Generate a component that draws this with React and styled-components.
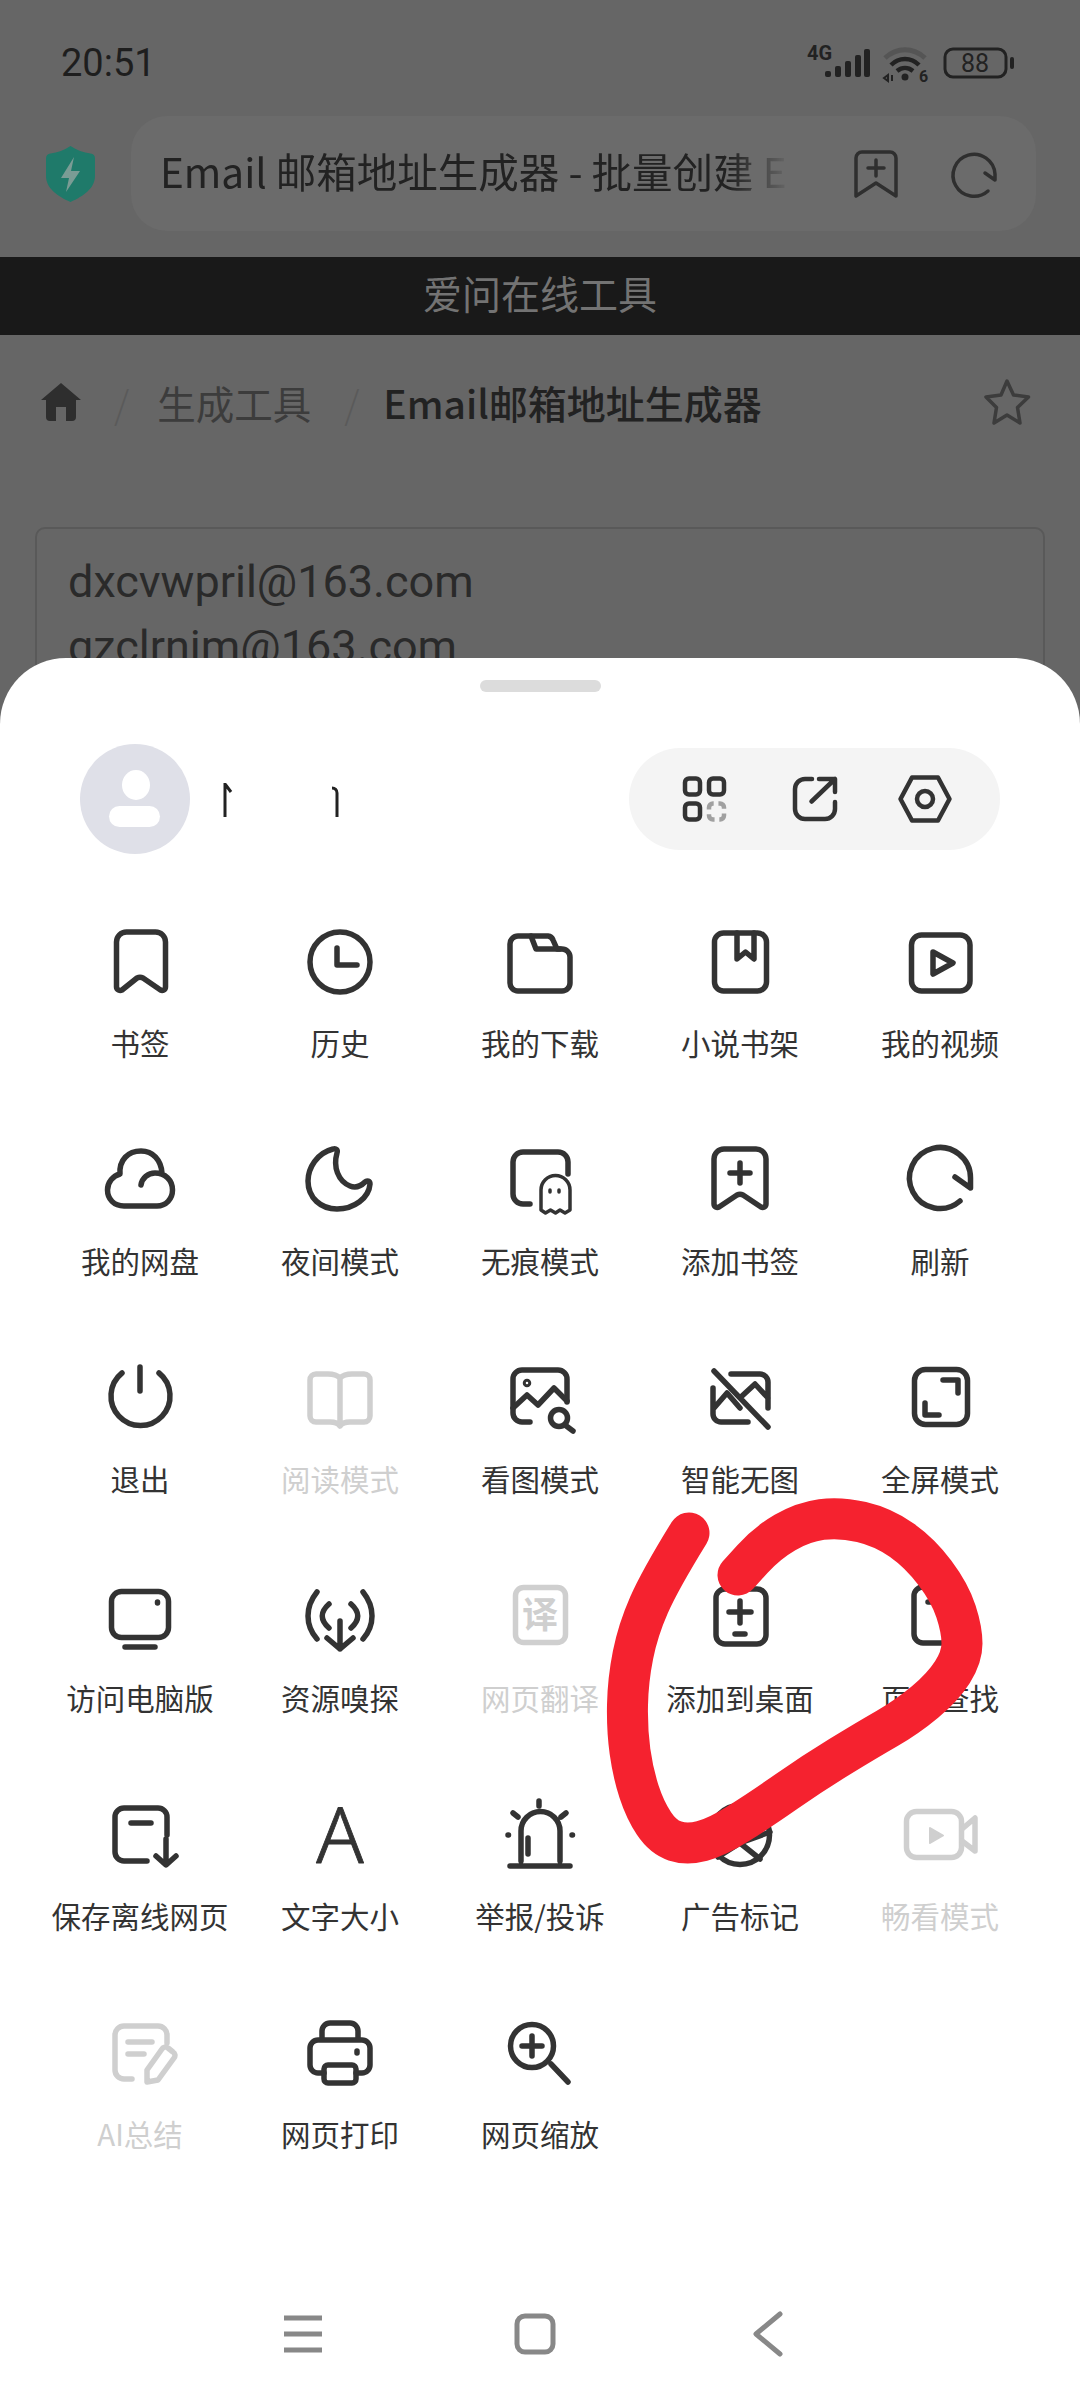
import React from 'react'
import styled, { createGlobalStyle } from 'styled-components'

const GlobalStyle = createGlobalStyle`
  html, body { margin: 0; padding: 0; background: #666; }
  body { font-family: "Noto Sans CJK SC", "Noto Sans", sans-serif; }
`

const Page = styled.div`
  position: relative;
  width: 1080px;
  height: 2400px;
  overflow: hidden;
  background: #666666;
`
const StatusBar = styled.div`
  display: flex;
  justify-content: space-between;
  align-items: flex-start;
  height: 116px;
  box-sizing: border-box;
  padding: 40px 60px 0 61px;
`
const Time = styled.div`
  font-family: Roboto, sans-serif;
  font-size: 38px;
  line-height: 46px;
  color: #1e1e1e;
`
const AddressRow = styled.div`
  display: flex;
  align-items: center;
  gap: 36px;
  height: 115px;
  padding-left: 46px;
`
const AddressPill = styled.div`
  display: flex;
  align-items: center;
  width: 905px;
  height: 115px;
  box-sizing: border-box;
  padding: 0 0 0 29px;
  border-radius: 36px;
  background: #6b6b6b;
`
const AddressText = styled.div`
  width: 632px;
  margin: 0 56px 6px 0;
  white-space: nowrap;
  font-size: 40.5px;
  color: #222;
  -webkit-mask-image: linear-gradient(to right, #000 90%, transparent 100%);
  mask-image: linear-gradient(to right, #000 90%, transparent 100%);
`
const AddressActions = styled.div`
  display: flex;
  gap: 42px;
  color: #2f2f2f;
`
const SiteBar = styled.div`
  display: flex;
  align-items: center;
  justify-content: center;
  height: 78px;
  box-sizing: border-box;
  padding-bottom: 8px;
  margin-top: 26px;
  background: #191919;
  color: #737373;
  font-size: 39px;
`
const Crumbs = styled.div`
  display: flex;
  align-items: center;
  height: 138px;
  box-sizing: border-box;
  padding: 0 49px 5px 41px;
  font-size: 38.5px;
  color: #3c3c3c;
`
const CrumbSep = styled.span`
  margin: 0 ${(p) => p.$right}px 0 33px;
  color: #5a5a5a;
  font-weight: 300;
`
const CrumbNow = styled.span`
  flex: 1;
  color: #222;
  font-weight: 500;
  font-size: 39px;
`
const EmailBox = styled.div`
  margin: 54px 35px 0;
  height: 300px;
  box-sizing: border-box;
  padding: 20px 31px;
  border: 2px solid #595959;
  border-radius: 10px;
  font-family: Roboto, sans-serif;
  font-size: 45px;
  line-height: 65px;
  color: #2a2a2a;
`
const Sheet = styled.div`
  position: absolute;
  left: 0;
  right: 0;
  top: 658px;
  bottom: 0;
  display: flex;
  flex-direction: column;
  background: #fff;
  border-radius: 66px 66px 0 0;
`
const Handle = styled.div`
  align-self: center;
  width: 121px;
  height: 12px;
  margin: 22px 0 52px;
  border-radius: 6px;
  background: #dcdcdc;
`
const UserRow = styled.div`
  display: flex;
  align-items: center;
  height: 110px;
  padding: 0 80px;
`
const Avatar = styled.div`
  width: 110px;
  height: 110px;
  border-radius: 50%;
  background: #dfe0e8;
  overflow: hidden;
`
const NameMarks = styled.svg`
  width: 120px;
  height: 40px;
  margin: 4px auto 0 32px;
`
const ToolPill = styled.div`
  display: flex;
  align-items: center;
  justify-content: center;
  gap: 54px;
  width: 371px;
  height: 102px;
  border-radius: 51px;
  background: #f4f4f4;
  color: #333;
`
const Grid = styled.div`
  display: grid;
  grid-template-columns: repeat(5, 200px);
  grid-auto-rows: 140px;
  row-gap: 78.2px;
  padding-left: 40px;
  margin-top: 68px;
`
const Item = styled.div`
  display: flex;
  flex-direction: column;
  align-items: center;
  color: ${(p) => (p.$off ? '#cfcfcf' : '#333')};
`
const Label = styled.div`
  margin-top: 20px;
  font-size: 29.5px;
  line-height: 40px;
  white-space: nowrap;
`
const NavBar = styled.div`
  display: flex;
  justify-content: center;
  align-items: center;
  gap: 172px;
  margin-top: auto;
  height: 132px;
  padding: 0 10px 0 0;
  color: #888;
`
const Icon = styled.svg`
  display: block;
  flex: none;
  overflow: visible;
  width: ${(p) => p.$s || 80}px;
  height: ${(p) => p.$s || 80}px;
  fill: none;
  stroke: currentColor;
  stroke-width: ${(p) => p.$w || 5.5};
  stroke-linecap: round;
  stroke-linejoin: round;
`
const Scribble = styled.svg`
  position: absolute;
  left: 0;
  top: 0;
  width: 1080px;
  height: 2400px;
  pointer-events: none;
`

const I = ({ children, s, w, vb = 80 }) => (
  <Icon $s={s} $w={w} viewBox={`0 0 ${vb} ${vb}`}>{children}</Icon>
)

function Glyph({ y, size, weight, thicken, children }) {
  return (
    <text
      x="40"
      y={y}
      textAnchor="middle"
      fontSize={size}
      fontWeight={weight}
      fontFamily={'"Noto Sans", "Noto Sans CJK SC", sans-serif'}
      fill="currentColor"
      stroke={thicken ? 'currentColor' : 'none'}
      strokeWidth={thicken || 0}
    >
      {children}
    </text>
  )
}

const menu = [
  ['书签', <path d="M16.500 65V20a10 10 0 0 1 10-10h29a10 10 0 0 1 10 10v45c0 3-3 4-5 3L43 56c-2-1-4-1-6 0L22 68c-2 1-5.500 0-5.500-3z" />],
  ['历史', <><circle cx="40" cy="40" r="30" /><path d="M37 26v17h20" /></>],
  ['我的下载', <><path d="M10 22a8 8 0 0 1 8-8h30a6 6 0 0 1 5 4l4 9h5a8 8 0 0 1 8 8v26a8 8 0 0 1-8 8H18a8 8 0 0 1-8-8z" /><path d="M31 14l5 13h24" /></>],
  ['小说书架', <><rect x="14.500" y="11" width="52" height="58" rx="9" /><path d="M37 11v26l8.500-7 8.500 7V11" /></>],
  ['我的视频', <><rect x="11.500" y="13" width="58.500" height="56" rx="10" /><path d="M33 30l20 11-20 11z" /></>],
  ['我的网盘', <path d="M24 66C14 66 7.500 59 7.500 50c0-8 5.500-14 12.500-16C19 20 28 11 41 11c12 0 20 9 21 22M41 45c1-7 7-12 14-12 10 0 17.500 7 17.500 17 0 9-6.500 16-15.500 16H24" />],
  ['夜间模式', <path d="M33 9C17 13 8 28 8 41c0 17 13 28 29 28 17 0 32-11 33-25 0-3-3-4-5-2-5 5-10 6-15 4-12-5-17-19-13-33 1-3-1-5-4-4z" />],
  ['无痕模式', <><path d="M30 64h-7a10 10 0 0 1-10-10V22a10 10 0 0 1 10-10h35a10 10 0 0 1 10 10v12" /><path strokeWidth="3.500" d="M41 70V50a14.500 14.500 0 0 1 29 0v20l-5 3-5-3-4.500 3-5-3-5 3z" /><path strokeWidth="3.500" d="M50 50v2M59 50v2" /></>],
  ['添加书签', <><path d="M14 64V19a10 10 0 0 1 10-10h32a10 10 0 0 1 10 10v45c0 3-3 4-5 3L43 55c-2-1-4-1-6 0L19 67c-2 1-5 0-5-3z" /><path d="M40 23v20M30 33h20" /></>],
  ['刷新', <path d="M60 61A30.500 30.500 0 1 1 70.500 38v10L55 37" />],
  ['退出', <path d="M22 15a29.500 29.500 0 1 0 37 0M40 9v24" />],
  ['阅读模式', <path d="M40 20c-3-3-7-4-12-4H16a6 6 0 0 0-6 6v36a6 6 0 0 0 6 6h14c4 0 8 1 10 4 2-3 6-4 10-4h14a6 6 0 0 0 6-6V22a6 6 0 0 0-6-6H52c-5 0-9 1-12 4zm0 0v48" />, true],
  ['看图模式', <><path d="M30 64h-8a9 9 0 0 1-9-9V21a9 9 0 0 1 9-9h36a9 9 0 0 1 9 9v23" /><path d="M13 50l14-13 11 10 16-17 13 13" /><circle cx="27" cy="25" r="1.500" /><circle cx="59" cy="60" r="8.500" /><path d="M65 67l8 6" /></>],
  ['智能无图', <><path d="M31 16h29a8 8 0 0 1 8 8v26M13 30v26a8 8 0 0 0 8 8h27M14 13l54 56M14 50l13-15 13 15M42 38l13-12 13 14" /></>],
  ['全屏模式', <><rect x="14.500" y="11.500" width="53" height="55" rx="11" /><path d="M43 22h15v13M25 45v12h14" /></>],
  ['访问电脑版', <><rect x="11.500" y="14.500" width="57" height="46" rx="10" /><path d="M25 70h30M57.500 25v1" /></>],
  ['资源嗅探', <path d="M17 15C5 30 5 48 17 62M63 15c12 15 12 33 0 47M29 27c-9 8-9 16 0 24M51 27c9 8 9 16 0 24M40 44v28M27 61l13 11 13-11" />],
  ['网页翻译', <><rect x="15.500" y="10.500" width="50" height="55" rx="8" /><Glyph y="51" size="36" weight="700">译</Glyph></>, true],
  ['添加到桌面', <><rect x="16" y="12" width="50" height="55" rx="9" /><path d="M40 24v22M29 35h22M35 57h10" /></>],
  ['页面查找', <><rect x="14" y="10" width="52" height="56" rx="9" /><path d="M28 25h14" /><circle cx="52" cy="50" r="9" /><path d="M58 57l7 7" /></>],
  ['保存离线网页', <path d="M47 66H24a9 9 0 0 1-9-9V22a9 9 0 0 1 9-9h34a9 9 0 0 1 9 9v18M31 28h20M66 44v25M56 61l10 9 10-9" />],
  ['文字大小', <Glyph y="68" size="78" weight="300" thicken="0.8">A</Glyph>],
  ['举报/投诉', <path d="M21 66V36a19.500 19.500 0 0 1 39 0v30M10 71h60M28 43v16M39 6v5M13 18l5 4M66 18l-5 4M8 40h.5M72 40h.5" />],
  ['广告标记', <><circle cx="40" cy="40" r="29.500" /><path d="M40 48l30-11M40 48l20 16M40 48L18 62" /></>],
  ['畅看模式', <><rect x="6.500" y="16.500" width="55" height="46" rx="10" /><path d="M62 34l13-11v33L62 46" /><path fill="currentColor" strokeWidth="2" d="M30 33l13 7.500-13 7.500z" /></>, true],
  ['AI总结', <><path d="M32 66h-8a9 9 0 0 1-9-9V22a9 9 0 0 1 9-9h34a9 9 0 0 1 9 9v8M28 29h24M28 41h16M47 69V57l15-21a4 4 0 0 1 6-1l5 4a4 4 0 0 1 1 6L58 67z" /></>, true],
  ['网页打印', <><path d="M22 27v-9a8 8 0 0 1 8-8h20a8 8 0 0 1 8 8v9M24 60h-6a8 8 0 0 1-8-8V35a8 8 0 0 1 8-8h44a8 8 0 0 1 8 8v17a8 8 0 0 1-8 8h-6M57 38v2" /><rect x="24" y="52" width="32" height="18" rx="4" /></>],
  ['网页缩放', <><circle cx="32" cy="33" r="21.500" /><path d="M32 23v20M22 33h20M51 51l17 18" /></>],
]

const scribble = [
  [689, 1533], [660, 1580], [638, 1630], [628, 1680], [627, 1730], [633, 1773],
  [645, 1810], [663, 1837], [687, 1845], [717, 1837], [760, 1810], [813, 1773],
  [867, 1740], [907, 1717], [943, 1687], [962, 1657], [962, 1630], [950, 1593],
  [920, 1553], [883, 1527], [840, 1517], [803, 1522], [767, 1543], [738, 1575],
]

// runs a smooth curve through the midpoints of the hand drawn stroke
function smoothPath(pts) {
  let d = `M${pts[0][0]} ${pts[0][1]}`
  for (let i = 1; i < pts.length - 1; i++) {
    const mx = (pts[i][0] + pts[i + 1][0]) / 2
    const my = (pts[i][1] + pts[i + 1][1]) / 2
    d += `Q${pts[i][0]} ${pts[i][1]} ${mx} ${my}`
  }
  const last = pts[pts.length - 1]
  return `${d}L${last[0]} ${last[1]}`
}

function StatusIcons() {
  return (
    <svg width="220" height="50" viewBox="800 40 220 50" fill="none" stroke="#222">
      <text x="807" y="60" fontFamily="Roboto, sans-serif" fontWeight="700" fontSize="20" fill="#222" stroke="none">4G</text>
      <g stroke="none" fill="#222">
        <rect x="825" y="71" width="6" height="6" rx="2" />
        <rect x="835" y="66" width="6" height="11" rx="2" />
        <rect x="845" y="61" width="6" height="16" rx="2" />
        <rect x="855" y="55" width="6" height="22" rx="2" />
        <rect x="864" y="49" width="6" height="28" rx="2" />
      </g>
      <path d="M885 58c12-11 28-11 40 0" stroke="#555" strokeWidth="5" />
      <path d="M891 65c8-8 20-8 28 0M897 71c5-4 11-4 16 0" strokeWidth="4.500" />
      <circle cx="905" cy="77" r="3.500" fill="#222" stroke="none" />
      <text x="919" y="82" fontFamily="Roboto, sans-serif" fontWeight="700" fontSize="16" fill="#222" stroke="none">6</text>
      <path d="M884 78l4-3v6zM892 75v6" strokeWidth="2" />
      <rect x="945" y="49" width="61" height="28" rx="8" strokeWidth="3" />
      <text x="975" y="72" textAnchor="middle" fontFamily="Roboto, sans-serif" fontSize="25" fill="#222" stroke="none">88</text>
      <path d="M1012 59v8" strokeWidth="4" strokeLinecap="round" />
    </svg>
  )
}

export default function App() {
  return (
    <Page>
      <GlobalStyle />
      <StatusBar>
        <Time>20:51</Time>
        <StatusIcons />
      </StatusBar>
      <AddressRow>
        <svg width="49" height="56" viewBox="0 0 49 56">
          <path d="M24.500 0c6 4 13 6.500 20 7.500 3 .5 4.500 2 4.500 5V30c0 12-11 20-24.500 26C11 50 0 42 0 30V12.500c0-3 1.500-4.500 4.500-5C11.500 6.500 18.500 4 24.500 0z" fill="#1f7a6a" />
          <path d="M28 11L15 32h8l-3 14 14-21h-9z" fill="#7a9c95" />
        </svg>
        <AddressPill>
          <AddressText>Email 邮箱地址生成器 - 批量创建 E</AddressText>
          <AddressActions>
            <I s={56} w={3.500} vb={56}>
              <path d="M8 50V12a6 6 0 0 1 6-6h28a6 6 0 0 1 6 6v38L28 37zM28 14v16M20 22h16" />
            </I>
            <I s={56} w={3.500} vb={56}>
              <path d="M42 45A21 21 0 1 1 49 28v6L39 27" />
            </I>
          </AddressActions>
        </AddressPill>
      </AddressRow>
      <SiteBar>爱问在线工具</SiteBar>
      <Crumbs>
        <svg width="40" height="38" viewBox="0 0 40 38">
          <path d="M20 0L40 17h-5v17a4 4 0 0 1-4 4h-6V24H15v14H9a4 4 0 0 1-4-4V17H0z" fill="#2e2e2e" />
        </svg>
        <CrumbSep $right={28}>/</CrumbSep>
        生成工具
        <CrumbSep $right={24}>/</CrumbSep>
        <CrumbNow>Email邮箱地址生成器</CrumbNow>
        <I s={48} w={3.500} vb={48}>
          <path d="M24 3l6.500 14 15 2-11 10.500L37 45l-13-8-13 8 2.500-15.500L3 19l15-2z" />
        </I>
      </Crumbs>
      <EmailBox>
        dxcvwpril@163.com
        <br />
        gzclrnim@163.com
      </EmailBox>

      <Sheet>
        <Handle />
        <UserRow>
          <Avatar>
            <svg width="110" height="110" viewBox="0 0 110 110" fill="#fff">
              <ellipse cx="56" cy="41" rx="14" ry="15" />
              <rect x="29" y="62" width="51" height="21" rx="10.500" />
            </svg>
          </Avatar>
          <NameMarks viewBox="0 0 120 40" fill="none" stroke="#222" strokeWidth="3">
            <path d="M3 2v34M3 3l6 8M115 36V12c0-3-2-5-5-5" />
          </NameMarks>
          <ToolPill>
            <I s={56} w={4.500} vb={56}>
              <rect x="8" y="7.500" width="15" height="16" rx="4" />
              <rect x="32" y="7.500" width="15" height="16" rx="4" />
              <rect x="8" y="32.500" width="15" height="16" rx="4" />
              <rect x="32" y="32.500" width="15" height="16" rx="4" stroke="#a0a0a0" pathLength="40" strokeDasharray="6.500 3.500" strokeDashoffset="-4" strokeLinecap="butt" />
            </I>
            <I s={56} w={4.500} vb={56}>
              <path d="M25 8h-7A10 10 0 0 0 8 18v20a10 10 0 0 0 10 10h20a10 10 0 0 0 10-10v-7M24.500 30.500L48 8M32 8h16v13" />
            </I>
            <I s={56} w={4.500} vb={56}>
              <path d="M3.500 28L15 6.500h26L52.500 28 41 49.500H15z" />
              <circle cx="28" cy="28" r="8" />
            </I>
          </ToolPill>
        </UserRow>
        <Grid>
          {menu.map(([label, icon, off]) => (
            <Item key={label} $off={off}>
              <I>{icon}</I>
              <Label>{label}</Label>
            </Item>
          ))}
        </Grid>
        <NavBar>
          <I s={60} w={5} vb={60}>
            <path d="M11 14h38M11 30h38M11 46h38" strokeLinecap="butt" />
          </I>
          <I s={60} w={5} vb={60}>
            <rect x="12" y="12" width="36" height="36" rx="8" />
          </I>
          <I s={60} w={5} vb={60}>
            <path d="M43 10L19 30l24 20" />
          </I>
        </NavBar>
      </Sheet>

      <Scribble viewBox="0 0 1080 2400" fill="none">
        <path d={smoothPath(scribble)} stroke="#f5222f" strokeWidth="41" strokeLinecap="round" strokeLinejoin="round" />
      </Scribble>
    </Page>
  )
}
